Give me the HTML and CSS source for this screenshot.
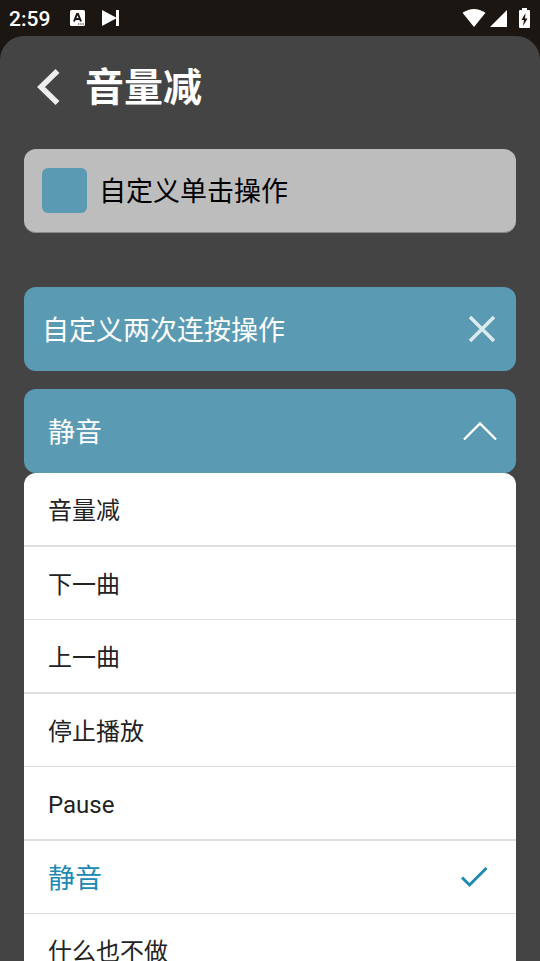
FILE: index.html
```html
<!DOCTYPE html>
<html lang="zh-CN">
<head>
<meta charset="utf-8">
<meta name="viewport" content="width=device-width, initial-scale=1">
<title>音量减</title>
<link rel="stylesheet" href="styles.css">
</head>
<body>
<div class="statusbar">
  <time class="clock">2:59</time>
  <svg class="notice" width="15" height="16" viewBox="0 0 15 16" aria-hidden="true">
    <rect width="15" height="16" rx="1.500" fill="#fff"/>
    <path d="M4 11.500L7 4H8L11 11.500M5.200 9H9.800" fill="none" stroke="#1c1612" stroke-width="2"/>
    <path d="M8 14H9.300M10.300 14H11.600M12.600 14H13.900" stroke="#1c1612" stroke-width="1.200"/>
  </svg>
  <svg class="skip" width="18" height="16" viewBox="0 0 18 16" aria-hidden="true">
    <path d="M0 0L14 7.500V0H17V16H14V8.500L0 16Z" fill="#fff"/>
  </svg>
  <span class="spacer"></span>
  <svg width="24" height="18" viewBox="0 0 24 18" aria-hidden="true">
    <path d="M0.500 3.800Q12 -3.800 23.500 3.800L12 18Z" fill="#fff"/>
  </svg>
  <svg class="signal" width="17" height="17" viewBox="0 0 17 17" aria-hidden="true">
    <path d="M17 0V17H0Z" fill="#fff"/>
  </svg>
  <svg class="battery" width="11" height="20" viewBox="0 0 11 20" aria-hidden="true">
    <path d="M3 0H8V2H10Q11 2 11 3V19Q11 20 10 20H1Q0 20 0 19V3Q0 2 1 2H3Z" fill="#fff"/>
    <path d="M6.500 5L2.500 12H5L4 18L8.500 10.500H6Z" fill="#1c1612"/>
  </svg>
</div>
<main class="screen">
  <header class="header">
    <button class="back" type="button" aria-label="返回">
      <svg width="24" height="36" viewBox="0 0 24 36" aria-hidden="true"><path d="M21.500 2L5 18L21.500 34" fill="none" stroke="#eee" stroke-width="5.500"/></svg>
    </button>
    <h1>音量减</h1>
  </header>
  <label class="card single" for="single-click">
    <input type="checkbox" id="single-click">
    <span class="text">自定义单击操作</span>
  </label>
  <section class="card double">
    <h2 class="text">自定义两次连按操作</h2>
    <button class="close" type="button" aria-label="关闭">
      <svg width="28" height="28" viewBox="0 0 28 28" aria-hidden="true"><path d="M2 2L26 26M26 2L2 26" fill="none" stroke="#dcebf0" stroke-width="3.500"/></svg>
    </button>
  </section>
  <button class="card selector" type="button" aria-haspopup="listbox" aria-expanded="true" aria-controls="actions">
    <span class="text">静音</span>
    <svg width="34" height="20" viewBox="0 0 34 20" aria-hidden="true"><path d="M1 18.500L17 2.500L33 18.500" fill="none" stroke="#fff" stroke-width="2.400"/></svg>
  </button>
  <div class="options" id="actions" role="listbox" aria-label="操作">
    <button type="button" role="option" aria-selected="false"><span class="text">音量减</span></button>
    <button type="button" role="option" aria-selected="false"><span class="text">下一曲</span></button>
    <button type="button" role="option" aria-selected="false"><span class="text">上一曲</span></button>
    <button type="button" role="option" aria-selected="false"><span class="text">停止播放</span></button>
    <button type="button" role="option" aria-selected="false"><span class="text">Pause</span></button>
    <button type="button" role="option" aria-selected="true"><span class="text">静音</span>
      <svg width="28" height="22" viewBox="0 0 28 22" aria-hidden="true"><path d="M2 11.500L9.500 19L26.500 2" fill="none" stroke="#2089b3" stroke-width="3"/></svg>
    </button>
    <button type="button" role="option" aria-selected="false"><span class="text">什么也不做</span></button>
  </div>
</main>
</body>
</html>
```
FILE: styles.css
```css
* {
  box-sizing: border-box;
}

body {
  margin: 0;
  height: 100vh;
  display: flex;
  flex-direction: column;
  overflow: hidden;
  background: #1c1612;
  font-family: Roboto, "Noto Sans CJK SC", sans-serif;
}

button {
  margin: 0;
  padding: 0;
  border: 0;
  background: none;
  color: inherit;
  font: inherit;
  text-align: left;
}

svg {
  display: block;
  flex: none;
}

.statusbar {
  flex: none;
  display: flex;
  align-items: center;
  height: 36px;
  padding: 0 10px 0 9px;
  color: #fff;
}

.clock {
  padding-top: 2px;
  font-size: 21px;
  font-weight: 500;
}

.notice {
  margin-left: 20px;
}

.skip {
  margin-left: 17px;
}

.spacer {
  flex: 1;
}

.signal {
  margin-left: 4px;
}

.battery {
  margin-left: 12px;
}

.screen {
  flex: 1;
  min-height: 0;
  padding: 0 24px;
  overflow: hidden;
  border-radius: 24px 24px 0 0;
  background: #444;
}

.header {
  display: flex;
  align-items: center;
  gap: 25px;
  height: 101px;
  padding: 0 12px;
}

h1 {
  margin: 0;
  padding-top: 2px;
  color: #fff;
  font-size: 39px;
  font-weight: 700;
  line-height: 44px;
}

.card {
  display: flex;
  align-items: center;
  width: 100%;
  height: 84px;
  border-radius: 12px;
  font-size: 27px;
  line-height: 36px;
}

.text {
  margin: 0;
  padding-top: 3px;
  font: inherit;
}

.single {
  margin-top: 12px;
  padding: 0 18px;
  gap: 12px;
  border-bottom: 1px solid #8a8a8a;
  background: #bdbdbd;
  color: #000;
}

.single input {
  appearance: none;
  width: 45px;
  height: 45px;
  margin: 0;
  border-radius: 6px;
  background: #5a9ab3;
}

.double,
.selector {
  justify-content: space-between;
  background: #5a9ab3;
  color: #fff;
}

.double {
  margin-top: 54px;
  padding: 0 20px 0 18px;
}

.selector {
  margin-top: 18px;
  padding: 0 19px 0 24px;
}

.options {
  overflow: hidden;
  border-radius: 12px 12px 0 0;
  background: #fff;
}

.options button {
  display: flex;
  align-items: center;
  justify-content: space-between;
  width: 100%;
  height: 74px;
  padding: 0 28px 0 24px;
  border-bottom: 2px solid #dedede;
  color: #222;
  font-size: 24px;
  line-height: 32px;
}

.options button:nth-child(even) {
  height: 73px;
  border-bottom-width: 1px;
}

.options button[aria-selected="true"] {
  color: #2089b3;
  font-size: 27px;
}
```
